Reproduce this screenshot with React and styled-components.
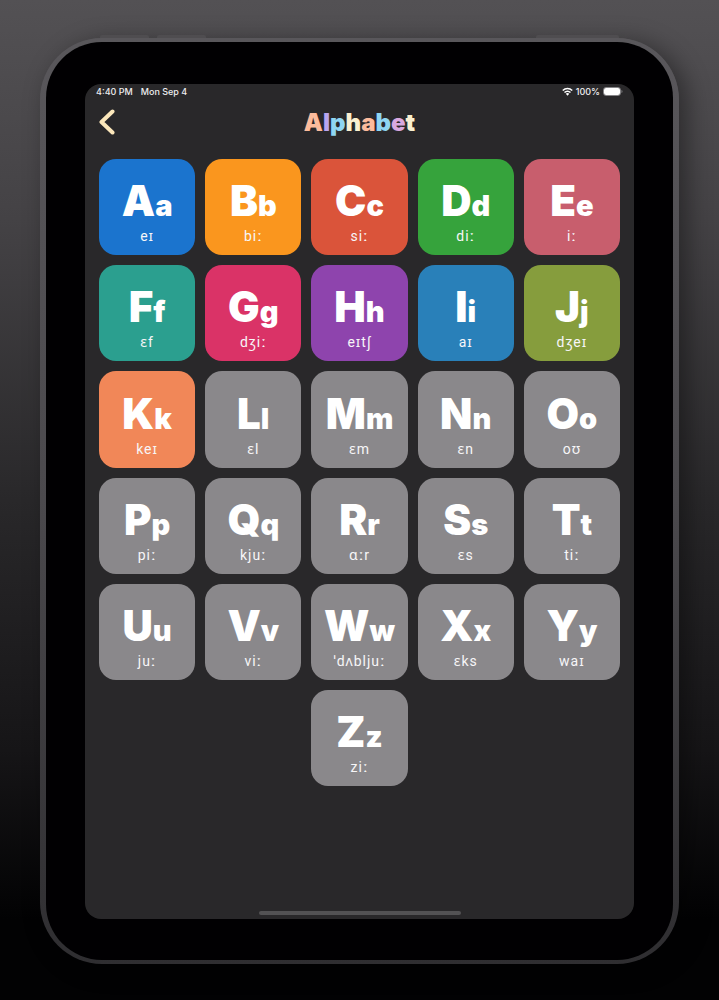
import React from "react";
import styled, { createGlobalStyle } from "styled-components";

const GlobalStyle = createGlobalStyle`
  * {
    box-sizing: border-box;
  }
  body {
    margin: 0;
    background: #000;
    font-family: Inter, "Liberation Sans", sans-serif;
  }
`;

const Page = styled.div`
  display: flex;
  flex-direction: column;
  min-height: 100vh;
  padding: 38px 40px 36px;
  background: linear-gradient(#535154, #444245 22%, #29282a 50%, #161517 75%, #020203 92%);
`;

const Device = styled.div`
  position: relative;
  display: flex;
  flex-direction: column;
  flex: 1;
  padding: 4px 6px;
  border-radius: 62px;
  background: linear-gradient(#59575b, #4b494d 50%, #2f2e31);
  box-shadow: 8px 4px 24px rgba(0, 0, 0, 0.4);
`;

const SideButton = styled.span`
  position: absolute;
  top: -3px;
  left: ${({ $left }) => $left};
  width: ${({ $width }) => $width};
  height: 3px;
  border-radius: 2px 2px 0 0;
  background: #4f4d50;
`;

const Bezel = styled.div`
  display: flex;
  flex-direction: column;
  flex: 1;
  padding: 42px 39px 41px;
  border-radius: 56px;
  background: #010002;
`;

const Screen = styled.main`
  display: flex;
  flex-direction: column;
  flex: 1;
  padding: 0 14px 4px;
  border-radius: 16px;
  background: #29282a;
`;

const StatusBar = styled.div`
  display: flex;
  justify-content: space-between;
  align-items: center;
  height: 14px;
  margin: 0 -3px;
  font-size: 9px;
  font-weight: 500;
  color: #eeedef;
`;

const StatusGroup = styled.div`
  display: flex;
  align-items: center;
  gap: ${({ $gap }) => $gap};
`;

const Header = styled.header`
  display: grid;
  grid-template-columns: 40px 1fr 40px;
  align-items: center;
  height: 48px;
  margin-bottom: 13px;
`;

const BackButton = styled.button`
  display: flex;
  align-items: center;
  width: 40px;
  height: 40px;
  padding: 0;
  border: none;
  background: none;
  cursor: pointer;
`;

const Title = styled.h1`
  margin: 0;
  padding-top: 2px;
  font-family: Inter, sans-serif;
  font-size: 24px;
  font-weight: 900;
  line-height: 28px;
  text-align: center;
`;

const TitleLetter = styled.span`
  color: ${({ $color }) => $color};
`;

const LetterGrid = styled.div`
  display: grid;
  grid-template-columns: repeat(5, 1fr);
  gap: 10px;
`;

const Tile = styled.button`
  display: flex;
  flex-direction: column;
  align-items: center;
  justify-content: center;
  min-width: 0;
  aspect-ratio: 1;
  padding: 12px 0 0;
  border: none;
  border-radius: 17px;
  background: ${({ $color }) => $color || "#8a888b"};
  color: #fff;
  font-family: inherit;
  cursor: pointer;
  &:last-child {
    grid-column: 3;
  }
`;

const Capital = styled.span`
  font-size: 42px;
  font-weight: 900;
  line-height: 46px;
  white-space: nowrap;
`;

const Small = styled.span`
  font-size: 29px;
  line-height: 30px;
`;

const Phonetic = styled.span`
  font-family: Roboto, "Noto Sans", sans-serif;
  font-size: 14px;
  line-height: 24px;
  letter-spacing: 1px;
  color: #f7f6f8;
`;

const HomeIndicator = styled.div`
  width: 202px;
  height: 4px;
  margin: auto auto 0;
  border-radius: 2px;
  background: #535254;
`;

const title = [
  ["A", "#fcbb9c"],
  ["l", "#b9a5ef"],
  ["p", "#8fd6f3"],
  ["h", "#fbf0d0"],
  ["a", "#fcbb9c"],
  ["b", "#8fd6f3"],
  ["e", "#d9a8df"],
  ["t", "#fbf0d0"],
];

const letters = [
  ["A", "eɪ", "#1b74ce"],
  ["B", "biː", "#fa961e"],
  ["C", "siː", "#da543a"],
  ["D", "diː", "#36a33c"],
  ["E", "iː", "#c85e6d"],
  ["F", "ɛf", "#2b9f8f"],
  ["G", "dʒiː", "#da3367"],
  ["H", "eɪtʃ", "#8e44ad"],
  ["I", "aɪ", "#2980b9"],
  ["J", "dʒeɪ", "#869d3d"],
  ["K", "keɪ", "#f18758"],
  ["L", "ɛl"],
  ["M", "ɛm"],
  ["N", "ɛn"],
  ["O", "oʊ"],
  ["P", "piː"],
  ["Q", "kjuː"],
  ["R", "ɑːr"],
  ["S", "ɛs"],
  ["T", "tiː"],
  ["U", "juː"],
  ["V", "viː"],
  ["W", "ˈdʌbljuː"],
  ["X", "ɛks"],
  ["Y", "waɪ"],
  ["Z", "ziː"],
];

function WifiIcon() {
  return (
    <svg width="11" height="9" viewBox="0 0 22 17" aria-hidden="true">
      <g fill="none" stroke="#fff" strokeWidth="3">
        <path d="M1.5 6.5C7 1 15 1 20.5 6.5" />
        <path d="M5 10.5c3.500-3.500 8.500-3.500 12 0" />
      </g>
      <path d="M11 17l-3.500-4c2-2 5-2 7 0z" fill="#fff" />
    </svg>
  );
}

function BatteryIcon() {
  return (
    <svg width="20" height="9" viewBox="0 0 20 9" aria-hidden="true">
      <rect x=".5" y=".5" width="17" height="8" rx="2.500" fill="none" stroke="#858487" />
      <rect x="1" y="1" width="16" height="7" rx="2" fill="#fff" />
      <path d="M18.500 3c1.300.5 1.300 2.500 0 3z" fill="#858487" />
    </svg>
  );
}

export default function App() {
  return (
    <>
      <GlobalStyle />
      <Page>
        <Device>
          <SideButton $left="60px" $width="49px" />
          <SideButton $left="117px" $width="49px" />
          <SideButton $left="496px" $width="83px" />
          <Bezel>
            <Screen>
              <StatusBar>
                <StatusGroup $gap="8px">
                  <span>4:40 PM</span>
                  <span>Mon Sep 4</span>
                </StatusGroup>
                <StatusGroup $gap="3px">
                  <WifiIcon />
                  <span>100%</span>
                  <BatteryIcon />
                </StatusGroup>
              </StatusBar>
              <Header>
                <BackButton aria-label="Back">
                  <svg width="16" height="26" viewBox="0 0 16 26" aria-hidden="true">
                    <path
                      d="M13.500 2.500L2.500 13l11 10.500"
                      fill="none"
                      stroke="#fbe7bb"
                      strokeWidth="4"
                      strokeLinecap="round"
                      strokeLinejoin="round"
                    />
                  </svg>
                </BackButton>
                <Title>
                  {title.map(([char, color], i) => (
                    <TitleLetter key={i} $color={color}>
                      {char}
                    </TitleLetter>
                  ))}
                </Title>
              </Header>
              <LetterGrid>
                {letters.map(([letter, phonetic, color]) => (
                  <Tile key={letter} $color={color}>
                    <Capital>
                      {letter}
                      <Small>{letter.toLowerCase()}</Small>
                    </Capital>
                    <Phonetic>{phonetic}</Phonetic>
                  </Tile>
                ))}
              </LetterGrid>
              <HomeIndicator />
            </Screen>
          </Bezel>
        </Device>
      </Page>
    </>
  );
}
